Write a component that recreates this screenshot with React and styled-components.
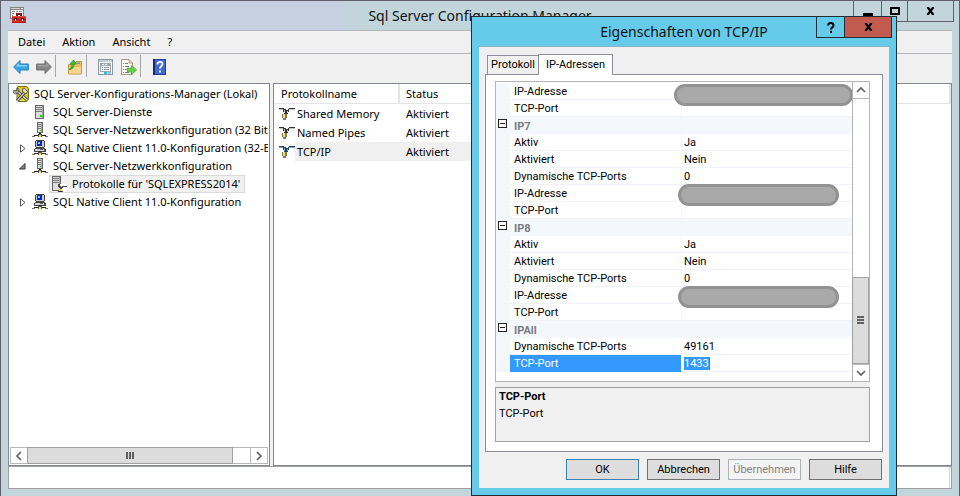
import React from 'react';
import styled, { createGlobalStyle, css } from 'styled-components';

const GlobalStyle = createGlobalStyle`
  * { box-sizing: border-box; }
  body { margin: 0; font: 11px/18px "Noto Sans", "Open Sans", sans-serif; color: #000; overflow: hidden; }
  button, input { font: inherit; color: inherit; margin: 0; padding: 0; border: 0; border-radius: 0; background: none; }
  ul { list-style: none; margin: 0; padding: 0; }
  svg { display: block; flex: none; }
`;

/* ---------- main window ---------- */
const Window = styled.div`
  position: relative;
  display: flex;
  flex-direction: column;
  height: 100vh;
  padding: 0 7px 7px;
  border: 1px solid #5f606b;
  border-bottom: 0;
  background: #c2d5db;
`;
const TitleBar = styled.header`
  display: grid;
  grid-template-columns: 1fr auto 1fr;
  height: 29px;
  margin: 0 -7px;
  padding: 0 5px;
  background: linear-gradient(90deg, #c6d0e1 335px, #c2d5db 360px);
`;
const TitleIcon = styled.span`padding: 6px 0 0 4px;`;
const Title = styled.h1`
  margin: 0;
  font-size: 14px;
  line-height: 29px;
  font-weight: 400;
  color: #111;
`;
const WindowButtons = styled.div`
  display: flex;
  justify-self: end;
  height: 21px;
  border: 1px solid #5f606b;
  border-top: 0;
`;
const WindowButton = styled.button`
  display: flex;
  align-items: center;
  justify-content: center;
  width: ${p => p.$width}px;
  & + & { border-left: 1px solid #5f606b; }
`;
const MenuBar = styled.nav`
  display: flex;
  gap: 17px;
  height: 24px;
  padding-left: 10px;
  border-top: 1px solid #b1b6bf;
  border-bottom: 1px solid #b4b6bf;
  background: #f0f0f0;
`;
const MenuItem = styled.button`line-height: 22px;`;
const ToolBar = styled.div`
  display: flex;
  height: 29px;
  padding: 1px 0 0 1px;
  background: #f0f0f0;
`;
const ToolButton = styled.button`
  display: flex;
  align-items: center;
  justify-content: center;
  width: 23px;
  height: 23px;
`;
const ToolSeparator = styled.span`
  width: 8px;
  height: 22px;
  border-left: 1px solid #a5a5a5;
`;
const Panels = styled.main`
  display: grid;
  grid-template-columns: 262px 1fr;
  gap: 3px;
  flex: 1;
  min-height: 0;
  background: #f0f0f0;
`;
const Panel = styled.section`
  display: flex;
  flex-direction: column;
  min-width: 0;
  border: 1px solid #828790;
  background: #fff;
`;
const StatusBar = styled.footer`
  height: 23px;
  padding-right: 1px;
  border: 1px solid #a0a0a4;
  background: #fff;
`;
const StatusGrip = styled.div`height: 100%; border-right: 1px solid #d7d7d7;`;

/* ---------- tree ---------- */
const Tree = styled.ul`flex: 1; margin-right: 1px; padding: 1px 0 0 4px; overflow: hidden;`;
const TreeRow = styled.li`
  display: flex;
  height: 18px;
  align-items: center;
  padding-left: ${p => (p.$level ? 3 : 0)}px;
`;
const Expander = styled.button`
  width: 16px;
  height: 18px;
  flex: none;
  padding-left: 3px;
`;
const TreeItem = styled.button`
  display: flex;
  align-items: center;
  gap: 5px;
  height: 18px;
  line-height: 16px;
  padding: 0 2px 0 0;
  white-space: nowrap;
  ${p => p.$selected && css`
    margin-left: 17px;
    padding: 0 5px 0 2px;
    background: #f0f0f0;
    box-shadow: inset 0 0 0 1px #dadada;
  `}
`;

/* ---------- scroll bars ---------- */
const ScrollBar = styled.div`
  display: flex;
  flex-direction: ${p => (p.$vertical ? 'column' : 'row')};
  flex: none;
  ${p => (p.$vertical ? css`width: 17px;` : css`height: 17px; margin: 0 1px 1px;`)}
  border: ${p => (p.$vertical ? '0 solid #b4b4b4' : '1px solid #b8b8b8')};
  border-left-width: 1px;
  background: #fff;
`;
const ScrollArrow = styled.button`
  display: flex;
  align-items: center;
  justify-content: center;
  flex: 0 0 16px;
  & svg { fill: none; stroke: #606060; stroke-width: 1.7; }
`;
const ScrollTrack = styled.div`
  display: flex;
  flex: 1;
  flex-direction: inherit;
  justify-content: ${p => (p.$end ? 'flex-end' : 'flex-start')};
  border: solid #b8b8b8;
  border-width: ${p => (p.$end ? '1px 0' : '0 1px')};
`;
const ScrollThumb = styled.div`
  display: flex;
  align-items: center;
  justify-content: center;
  flex: 0 0 ${p => p.$size};
  margin: ${p => (p.$vertical ? '0 0 0 -1px' : '-1px 0 -1px -1px')};
  border: 1px solid #a0a0a0;
  background: #dcdcdc;
  & svg { fill: #606060; }
`;

/* ---------- protocol list ---------- */
const ProtocolTable = styled.table`
  width: 100%;
  table-layout: fixed;
  border-spacing: 0;
  & th, & td { padding: 0; text-align: left; font-weight: 400; white-space: nowrap; }
`;
const NameCol = styled.col`width: 126px;`;
const StatusCol = styled.col`width: 100px;`;
const HeadCell = styled.th`
  height: 20px;
  border-right: 2px solid #e3e3e3;
  border-bottom: 1px solid #e5e5e5;
  line-height: 19px;
  & > span { padding-left: ${p => p.$indent}px; }
`;
const NameCell = styled.td`
  height: 19px;
  background: ${p => (p.$selected ? 'linear-gradient(90deg, #fff 21px, #f0f0f0 21px)' : '#fff')};
`;
const NameContent = styled.div`
  display: flex;
  align-items: center;
  gap: 2px;
  height: 19px;
  padding-left: 5px;
`;
const StatusCell = styled.td`
  height: 19px;
  background: ${p => (p.$selected ? '#f0f0f0' : '#fff')};
  & > span { padding-left: 6px; }
`;

/* ---------- properties dialog ---------- */
const Dialog = styled.div`
  position: absolute;
  top: 15px;
  right: 62px;
  bottom: 0;
  display: flex;
  flex-direction: column;
  width: 426px;
  padding: 0 7px 7px;
  border: 1px solid #1f2f3a;
  background: #66caeb;
  font-family: Roboto, "Open Sans", sans-serif;
  line-height: 16px;
`;
const DialogBar = styled.header`
  display: grid;
  grid-template-columns: 1fr auto 1fr;
  height: 29px;
`;
const DialogTitle = styled.h2`
  grid-column: 2;
  margin: 0;
  font: 400 14px/29px "Noto Sans", "Open Sans", sans-serif;
  color: #111;
`;
const DialogButtons = styled.div`
  display: flex;
  justify-self: end;
  height: 21px;
  margin-right: -3px;
  border: 1px solid #1f2f3a;
  border-top: 0;
`;
const DialogBarButton = styled.button`
  display: flex;
  align-items: center;
  justify-content: center;
  width: ${p => (p.$close ? 47 : 27)}px;
  ${p => p.$close && css`border-left: 1px solid #1f2f3a; background: #c35a50;`}
`;
const DialogBody = styled.div`
  display: flex;
  flex: 1;
  flex-direction: column;
  min-height: 0;
  padding: 0 6px 8px;
  border-top: 1px solid #8fb0bd;
  background: #f0f0f0;
`;
const Tabs = styled.div`
  display: flex;
  align-items: flex-end;
  height: 28px;
  margin-bottom: -1px;
  padding: 0 2px;
  z-index: 1;
`;
const Tab = styled.button`
  width: ${p => (p.$active ? 75 : 51)}px;
  height: ${p => (p.$active ? 21 : 19)}px;
  margin-bottom: ${p => (p.$active ? 0 : 1)}px;
  border: 1px solid #8c8e9b;
  border-bottom: 0;
  border-right-width: ${p => (p.$active ? 1 : 0)}px;
  background: ${p => (p.$active ? '#fff' : '#f0f0f0')};
  line-height: 18px;
`;
const TabPane = styled.div`
  display: flex;
  flex: 1;
  flex-direction: column;
  min-height: 0;
  padding: 6px 12px 9px 9px;
  border: 1px solid #8c8e9b;
  background: #fff;
`;
const PaneInner = styled.div`
  display: flex;
  flex: 1;
  flex-direction: column;
  gap: 5px;
  min-height: 0;
  background: #f0f0f0;
`;
const PropertyBox = styled.div`
  display: flex;
  flex: 1;
  min-height: 0;
  border: 1px solid #b4b4b4;
  background: #fff;
`;
const PropertyView = styled.div`flex: 1; min-width: 0; overflow: hidden; padding-top: 1px;`;
const PropertyTable = styled.table`
  width: 100%;
  table-layout: fixed;
  border-spacing: 0;
  line-height: 15px;
  & th, & td { height: 17px; padding: 0; text-align: left; font-weight: 400; white-space: nowrap; }
`;
const GutterCol = styled.col`width: 14px;`;
const LabelCol = styled.col`width: 172px;`;
const Gutter = styled.td`background: #f4f7fc; vertical-align: top;`;
const GroupCell = styled.th`
  background: #f4f7fc;
  && { padding: 2px 0 0 4px; font-weight: 700; color: #787c84; }
`;
const LabelCell = styled.th`
  border-right: 1px solid ${p => (p.$selected ? '#fff' : '#f4f7fc')};
  border-bottom: 1px solid ${p => (p.$selected ? '#3399ff' : '#f0f4fa')};
  background: ${p => (p.$selected ? '#3399ff' : '#fff')};
  color: ${p => (p.$selected ? '#fff' : '#000')};
  && { padding: 1px 0 0 4px; }
`;
const ValueCell = styled.td`
  position: relative;
  border-bottom: 1px solid #f0f4fa;
  && { padding: 1px 0 0 2px; }
`;
const ValueInput = styled.input`
  display: block;
  width: 26px;
  height: 13px;
  border-right: 1px solid #c8640a;
  background: #3399ff;
  color: #fff;
  line-height: 13px;
`;
const Toggle = styled.button`
  display: block;
  margin: 2px 0 0 2px;
`;
const Redaction = styled.span`
  position: absolute;
  z-index: 1;
  top: ${p => (p.$wide ? 1 : -1)}px;
  left: ${p => (p.$wide ? -8 : -4)}px;
  width: ${p => (p.$wide ? 179 : 161)}px;
  height: 22px;
  border: 3px solid #929292;
  border-radius: 11px;
  background: #a9a9a9;
`;
const Description = styled.div`
  height: 55px;
  padding: 0 3px;
  border: 1px solid #a0a0a0;
  line-height: 17px;
`;
const DescriptionTitle = styled.strong`display: block;`;
const DialogActions = styled.div`
  display: flex;
  justify-content: flex-end;
  gap: 8px;
  padding: 7px 1px 0 0;
`;
const ActionButton = styled.button`
  width: 73px;
  height: 21px;
  border: 1px solid ${p => (p.$primary ? '#3c7fb1' : '#707070')};
  background: #dddddd;
  &:disabled { border-color: #adb2b5; background: #f4f4f4; color: #838383; }
`;

/* ---------- icons ---------- */
const Icon = ({ w = 16, h = 16, crisp = true, children }) => (
  <svg width={w} height={h} viewBox={`0 0 ${w} ${h}`} shapeRendering={crisp ? 'crispEdges' : 'auto'} aria-hidden="true">{children}</svg>
);
const ToolboxIcon = () => (
  <Icon w={17} h={17}>
    <path fill="#858585" d="M0 0h14v12H0z" /><path fill="#f4f4f4" d="M1 3h12v8H1z" />
    <path fill="#d5d5d5" d="M1 1h9v1H1z" /><path fill="#fff" d="M11 1h2v1h-2z" />
    <path fill="#888" d="M2 4h3v1H2zM6 4h2v1H6zM9 4h3v1H9zM2 6h2v1H2zM2 8h1v1H2z" />
    <path fill="#7a1a18" d="M6 6h6v3h-2V8H8v1H6z" />
    <path fill="#d02a26" d="M2 9h14v7H2z" /><path fill="#e5504a" d="M2 9h14v1H2z" />
    <path fill="#b5201d" d="M2 12h14v1H2zM2 15h14v1H2z" />
    <path fill="#5f1513" d="M4 11h3v2H4zM11 11h3v2h-3z" /><path fill="#ddd" d="M5 12h1v2H5zM12 12h1v2h-1z" />
  </Icon>
);
const ArrowIcon = ({ forward }) => (
  <Icon crisp={false}>
    <g transform={forward ? 'matrix(-1 0 0 1 16 0)' : undefined}>
      <path d="M.6 8 7 1.500V5h8.400v6H7v3.500z" fill={forward ? '#868686' : '#34a6ea'} stroke={forward ? '#707070' : '#2f7fb8'} />
      <path d="M2.500 7.500 6 4v2h8v1.500z" fill={forward ? '#a0a0a0' : '#8bd6f8'} />
    </g>
  </Icon>
);
const FolderIcon = () => (
  <Icon crisp={false}>
    <path d="M1.500 5.500h6l1.500-3h5.500v12.500h-13z" fill="#eabf62" stroke="#c59a48" />
    <path d="M2 8h12v6.500H2z" fill="#f6d68a" />
    <path d="M10 3.500h3v1.500h-3z" fill="#6b9bd0" />
    <path d="M2 10.500c3.500 0 5-2 5-5.500h2.500L6.500 1 3 5h2c0 2.200-.7 4-3 5.500z" fill="#45c234" stroke="#2d9424" strokeWidth=".8" />
  </Icon>
);
const PropertiesIcon = () => (
  <Icon>
    <path fill="#8b96a3" d="M0 0h15v16H0z" /><path fill="#fff" d="M1 1h13v14H1z" />
    <path fill="#c3cbd5" d="M1 1h13v2H1z" /><path fill="#fff" d="M10 1h1v1h-1zM12 1h1v1h-1z" />
    <path fill="#9aa5b5" d="M2 4h11v9H2z" /><path fill="#fff" d="M4 5h2v1H4zM7 5h2v1H7zM3 7h9v5H3z" />
    <path fill="#4a8fc7" d="M4 8h1v1H4zM4 10h1v1H4z" /><path fill="#999" d="M6 8h5v1H6zM6 10h5v1H6z" />
    <path fill="#35b9ed" d="M6 13h3v2H6z" /><path fill="#8fc7e2" d="M10 13h3v2h-3z" />
  </Icon>
);
const ExportIcon = () => (
  <Icon crisp={false}>
    <path d="M.5.5H8L11.500 4v11.500H.5z" fill="#fffdf1" stroke="#a69b84" />
    <path d="M8 .5V4h3.500" fill="none" stroke="#a69b84" />
    <path d="M2 4.500h1M4 4.500h3M2 7.500h1M4 7.500h4M2 10.500h1M4 10.500h2M2 13.500h1M4 13.500h4" stroke="#717eaa" />
    <path d="M6.500 9h4V6.300L15.600 11l-5.100 4.500V13h-4z" fill="#6bce43" stroke="#4aa637" strokeWidth=".8" />
  </Icon>
);
const HelpIcon = () => (
  <Icon w={13} crisp={false}>
    <path fill="#24409d" d="M0 0h13v16H0z" /><path fill="#4068cf" d="M2 1h10v14H2z" />
    <path fill="#142a78" d="M0 0h2v16H0z" />
    <path d="M4.500 5.500c0-3.500 5-3.500 5-.5 0 2-2.500 2-2.500 4.500M7 11.500v2" fill="none" stroke="#fff" strokeWidth="1.800" />
  </Icon>
);
const ManagerIcon = () => (
  <Icon crisp={false}>
    <path d="M5 .500h8.500l2 2V13l-2 2.500H6L4 13.500V2z" fill="#d3c81b" stroke="#77700c" />
    <path d="M5 2.500c3 1 6 1 9 0M6 14h7" stroke="#fff45a" fill="none" />
    <path d="m5 6 9 8" stroke="#333" strokeWidth="3" /><path d="m5 6 9 8" stroke="#eee" strokeWidth="1.400" />
    <path d="m12 6-8 9" stroke="#333" strokeWidth="3" /><path d="m12 6-8 9" stroke="#c8c8c8" strokeWidth="1.400" />
    <path d="M0 5c0 3 4 4 5.500 1l.5-3-2-1v2.500H2z" fill="#aaa" stroke="#444" strokeWidth=".8" />
    <path d="m9 3 3-.5 2.500 3L13 8l-3-2z" fill="#ddd" stroke="#444" strokeWidth=".8" />
  </Icon>
);
const Tower = ({ x = 4, y = 1, h = 14, led = true }) => (
  <g transform={`translate(${x} ${y})`}>
    <path fill="#666" d={`M0 0h9v${h}H0z`} /><path fill="#dcdcdc" d={`M1 1h6v${h - 2}H1z`} />
    <path fill="#a5a5a5" d={`M7 1h1v${h - 2}H7z`} />
    <path fill="#777" d="M1 2h6v1H1zM1 4h6v1H1zM1 6h6v1H1z" />
    {led && <path fill="#00d800" d={`M5 ${h - 4}h2v2H5z`} />}
  </g>
);
const ServerIcon = () => <Icon><Tower x={3} /></Icon>;
const Cable = () => (
  <>
    <path fill="#777" d="M0 14h1v1H0zM15 14h1v1h-1z" /><path fill="#222" d="M2 13h12v1H2zM7 11h2v2H7z" />
    <path fill="#777" d="M1 14h2v1H1zM13 14h2v1h-2z" />
    <path fill="#555" d="M6 12h4v3H6z" /><path fill="#f3e72f" d="M7 13h2v2H7z" />
  </>
);
const NetworkIcon = () => (
  <Icon>
    <path fill="#666" d="M5 0h6v11H5z" /><path fill="#ddd" d="M6 1h3v9H6z" /><path fill="#aaa" d="M9 1h1v9H9z" />
    <path fill="#777" d="M6 2h3v1H6zM6 4h3v1H6zM6 6h3v1H6z" /><path fill="#00c800" d="M8 8h1v1H8z" />
    <Cable />
  </Icon>
);
const ClientIcon = () => (
  <Icon>
    <path fill="#444" d="M4 0h8v1h1v6h-1v1H4V7H3V1h1z" /><path fill="#ccc" d="M4 1h8v6H4z" />
    <path fill="#0024c8" d="M5 1h5v5H5z" /><path fill="#7fd4ff" d="M6 2h2v2H6z" />
    <path fill="#444" d="M3 8h10v1h1v3H2V9h1z" /><path fill="#d3d3d3" d="M3 9h9v2H3z" /><path fill="#666" d="M8 9h3v1H8z" />
    <Cable />
  </Icon>
);
const ProtocolsIcon = () => (
  <Icon>
    <Tower x={1} y={0} h={15} led={false} />
    <path fill="#fff" d="M8 8h8v8H8z" />
    <path fill="#444" d="M7 8h2v2h1v1h1v-1h5v1h-4v1h-1v3H9v-3H8v-1H7z" />
    <path fill="#e4d92a" d="M8 13h3v2H8z" /><path fill="#333" d="M7 15h5v1H7z" />
  </Icon>
);
const PlugIcon = ({ blue }) => (
  <Icon>
    <path fill={blue ? '#25415e' : '#333'} d="M0 2h5v1h2v1h2V3h1V2h6v1h-5v1h-1v2H9v2H5V6H4V4H3V3H0z" />
    <path fill={blue ? '#78a5cd' : '#c5c5c5'} d="M0 3h4v1H0zM10 3h6v1h-6zM5 4h1v3H5zM8 5h1v2H8z" />
    <path fill="#777" d="M3 8h5v4H3zM4 12h3v2H4z" /><path fill="#f0ea38" d="M4 8h2v4H4z" /><path fill="#8a850b" d="M6 8h1v4H6z" />
  </Icon>
);
const ClosedArrow = () => <Icon w={8} h={9} crisp={false}><path d="M1.500 .8v7.400l4.500-3.700z" fill="#fff" stroke="#555" /></Icon>;
const OpenArrow = () => <Icon w={7} h={7} crisp={false}><path d="M6 .5V6H.5z" fill="#888" stroke="#333" /></Icon>;
const Chevron = ({ d }) => <Icon w={10} h={10} crisp={false}><path d={d} /></Icon>;
const CrossIcon = () => <Icon w={9} h={8} crisp={false}><path d="m1.500 0 6 8m0-8-6 8" stroke="#000" strokeWidth="2.200" fill="none" /></Icon>;
const MinusBox = () => (
  <Icon w={9} h={9}><path fill="#222" d="M0 0h9v9H0z" /><path fill="#fff" d="M1 1h7v7H1z" /><path fill="#222" d="M2 4h5v1H2z" /></Icon>
);

/* ---------- data ---------- */
const treeItems = [
  { level: 0, icon: ManagerIcon, text: 'SQL Server-Konfigurations-Manager (Lokal)' },
  { level: 1, icon: ServerIcon, text: 'SQL Server-Dienste' },
  { level: 1, icon: NetworkIcon, text: 'SQL Server-Netzwerkkonfiguration (32 Bit)' },
  { level: 1, icon: ClientIcon, text: 'SQL Native Client 11.0-Konfiguration (32-Bit)', state: 'closed' },
  { level: 1, icon: NetworkIcon, text: 'SQL Server-Netzwerkkonfiguration', state: 'open' },
  { level: 2, icon: ProtocolsIcon, text: "Protokolle für 'SQLEXPRESS2014'", selected: true },
  { level: 1, icon: ClientIcon, text: 'SQL Native Client 11.0-Konfiguration', state: 'closed' },
];
const protocols = ['Shared Memory', 'Named Pipes', 'TCP/IP'];
const ipRows = [
  { label: 'Aktiv', value: 'Ja' },
  { label: 'Aktiviert', value: 'Nein' },
  { label: 'Dynamische TCP-Ports', value: '0' },
  { label: 'IP-Adresse', redacted: true },
  { label: 'TCP-Port' },
];
const properties = [
  { label: 'IP-Adresse', redacted: true, wide: true },
  { label: 'TCP-Port' },
  { group: 'IP7' }, ...ipRows,
  { group: 'IP8' }, ...ipRows,
  { group: 'IPAll' },
  { label: 'Dynamische TCP-Ports', value: '49161' },
  { label: 'TCP-Port', value: '1433', selected: true },
];

const TreePanel = () => (
  <Panel aria-label="Konsolenstruktur">
    <Tree>
      {treeItems.map(({ level, icon: Glyph, text, state, selected }) => (
        <TreeRow key={text} $level={level}>
          {level > 0 && (state
            ? <Expander aria-label={state === 'open' ? 'Reduzieren' : 'Erweitern'}>{state === 'open' ? <OpenArrow /> : <ClosedArrow />}</Expander>
            : <Expander as="span" />)}
          <TreeItem $selected={selected}><Glyph />{text}</TreeItem>
        </TreeRow>
      ))}
    </Tree>
    <ScrollBar>
      <ScrollArrow aria-label="Nach links"><Chevron d="M7 1 3 5l4 4" /></ScrollArrow>
      <ScrollTrack>
        <ScrollThumb $size="93%"><Icon w={8} h={7}><path d="M0 0h2v7H0zM3 0h2v7H3zM6 0h2v7H6z" /></Icon></ScrollThumb>
      </ScrollTrack>
      <ScrollArrow aria-label="Nach rechts"><Chevron d="m3 1 4 4-4 4" /></ScrollArrow>
    </ScrollBar>
  </Panel>
);

const ProtocolPanel = () => (
  <Panel>
    <ProtocolTable>
      <colgroup><NameCol /><StatusCol /><col /></colgroup>
      <thead>
        <tr><HeadCell $indent={7}><span>Protokollname</span></HeadCell><HeadCell $indent={6}><span>Status</span></HeadCell><HeadCell as="td" /></tr>
      </thead>
      <tbody>
        {protocols.map(name => {
          const selected = name === 'TCP/IP';
          return (
            <tr key={name}>
              <NameCell $selected={selected}><NameContent><PlugIcon blue={selected} />{name}</NameContent></NameCell>
              <StatusCell $selected={selected}><span>Aktiviert</span></StatusCell>
              <td />
            </tr>
          );
        })}
      </tbody>
    </ProtocolTable>
  </Panel>
);

const PropertyRow = ({ group, label, value, redacted, wide, selected }) => (group ? (
  <tr><Gutter><Toggle aria-label={`${group} reduzieren`}><MinusBox /></Toggle></Gutter><GroupCell colSpan={2}>{group}</GroupCell></tr>
) : (
  <tr>
    <Gutter />
    <LabelCell $selected={selected}>{label}</LabelCell>
    <ValueCell>
      {selected ? <ValueInput aria-label={label} defaultValue={value} /> : value}
      {redacted && <Redaction $wide={wide} />}
    </ValueCell>
  </tr>
));

const PropertiesDialog = () => (
  <Dialog role="dialog" aria-labelledby="dialog-title">
    <DialogBar>
      <DialogTitle id="dialog-title">Eigenschaften von TCP/IP</DialogTitle>
      <DialogButtons>
        <DialogBarButton aria-label="Hilfe">
          <Icon w={8} h={11} crisp={false}><path d="M1.200 3.500c0-3.300 5.300-3.300 5.300 0 0 2-2.500 2-2.500 4M4 8.800V11" fill="none" stroke="#000" strokeWidth="2" /></Icon>
        </DialogBarButton>
        <DialogBarButton $close aria-label="Schließen"><CrossIcon /></DialogBarButton>
      </DialogButtons>
    </DialogBar>
    <DialogBody>
      <Tabs role="tablist">
        <Tab role="tab">Protokoll</Tab>
        <Tab role="tab" aria-selected="true" $active>IP-Adressen</Tab>
      </Tabs>
      <TabPane role="tabpanel">
        <PaneInner>
          <PropertyBox>
            <PropertyView>
              <PropertyTable>
                <colgroup><GutterCol /><LabelCol /><col /></colgroup>
                <tbody>{properties.map((row, i) => <PropertyRow key={i} {...row} />)}</tbody>
              </PropertyTable>
            </PropertyView>
            <ScrollBar $vertical>
              <ScrollArrow aria-label="Nach oben"><Chevron d="m1 7 4-4 4 4" /></ScrollArrow>
              <ScrollTrack $end>
                <ScrollThumb $vertical $size="33%"><Icon w={7} h={8}><path d="M0 0h7v2H0zM0 3h7v2H0zM0 6h7v2H0z" /></Icon></ScrollThumb>
              </ScrollTrack>
              <ScrollArrow aria-label="Nach unten"><Chevron d="m1 3 4 4 4-4" /></ScrollArrow>
            </ScrollBar>
          </PropertyBox>
          <Description><DescriptionTitle>TCP-Port</DescriptionTitle>TCP-Port</Description>
        </PaneInner>
      </TabPane>
      <DialogActions>
        <ActionButton $primary>OK</ActionButton>
        <ActionButton>Abbrechen</ActionButton>
        <ActionButton disabled>Übernehmen</ActionButton>
        <ActionButton>Hilfe</ActionButton>
      </DialogActions>
    </DialogBody>
  </Dialog>
);

export default function App() {
  return (
    <>
      <GlobalStyle />
      <Window>
        <TitleBar>
          <TitleIcon><ToolboxIcon /></TitleIcon>
          <Title>Sql Server Configuration Manager</Title>
          <WindowButtons>
            <WindowButton $width={27} aria-label="Minimieren"><Icon w={10} h={10}><path d="M0 7h10v3H0z" /></Icon></WindowButton>
            <WindowButton $width={26} aria-label="Maximieren"><Icon w={10} h={8}><path d="M1 1h8v6H1z" fill="none" stroke="#000" strokeWidth="2" /></Icon></WindowButton>
            <WindowButton $width={46} aria-label="Schließen"><CrossIcon /></WindowButton>
          </WindowButtons>
        </TitleBar>
        <MenuBar>
          {['Datei', 'Aktion', 'Ansicht', '?'].map(m => <MenuItem key={m}>{m}</MenuItem>)}
        </MenuBar>
        <ToolBar>
          <ToolButton aria-label="Zurück"><ArrowIcon /></ToolButton>
          <ToolButton aria-label="Vorwärts"><ArrowIcon forward /></ToolButton>
          <ToolSeparator />
          <ToolButton aria-label="Übergeordneter Ordner"><FolderIcon /></ToolButton>
          <ToolSeparator />
          <ToolButton aria-label="Eigenschaften"><PropertiesIcon /></ToolButton>
          <ToolButton aria-label="Liste exportieren"><ExportIcon /></ToolButton>
          <ToolSeparator />
          <ToolButton aria-label="Hilfe"><HelpIcon /></ToolButton>
        </ToolBar>
        <Panels>
          <TreePanel />
          <ProtocolPanel />
        </Panels>
        <StatusBar><StatusGrip /></StatusBar>
        <PropertiesDialog />
      </Window>
    </>
  );
}
